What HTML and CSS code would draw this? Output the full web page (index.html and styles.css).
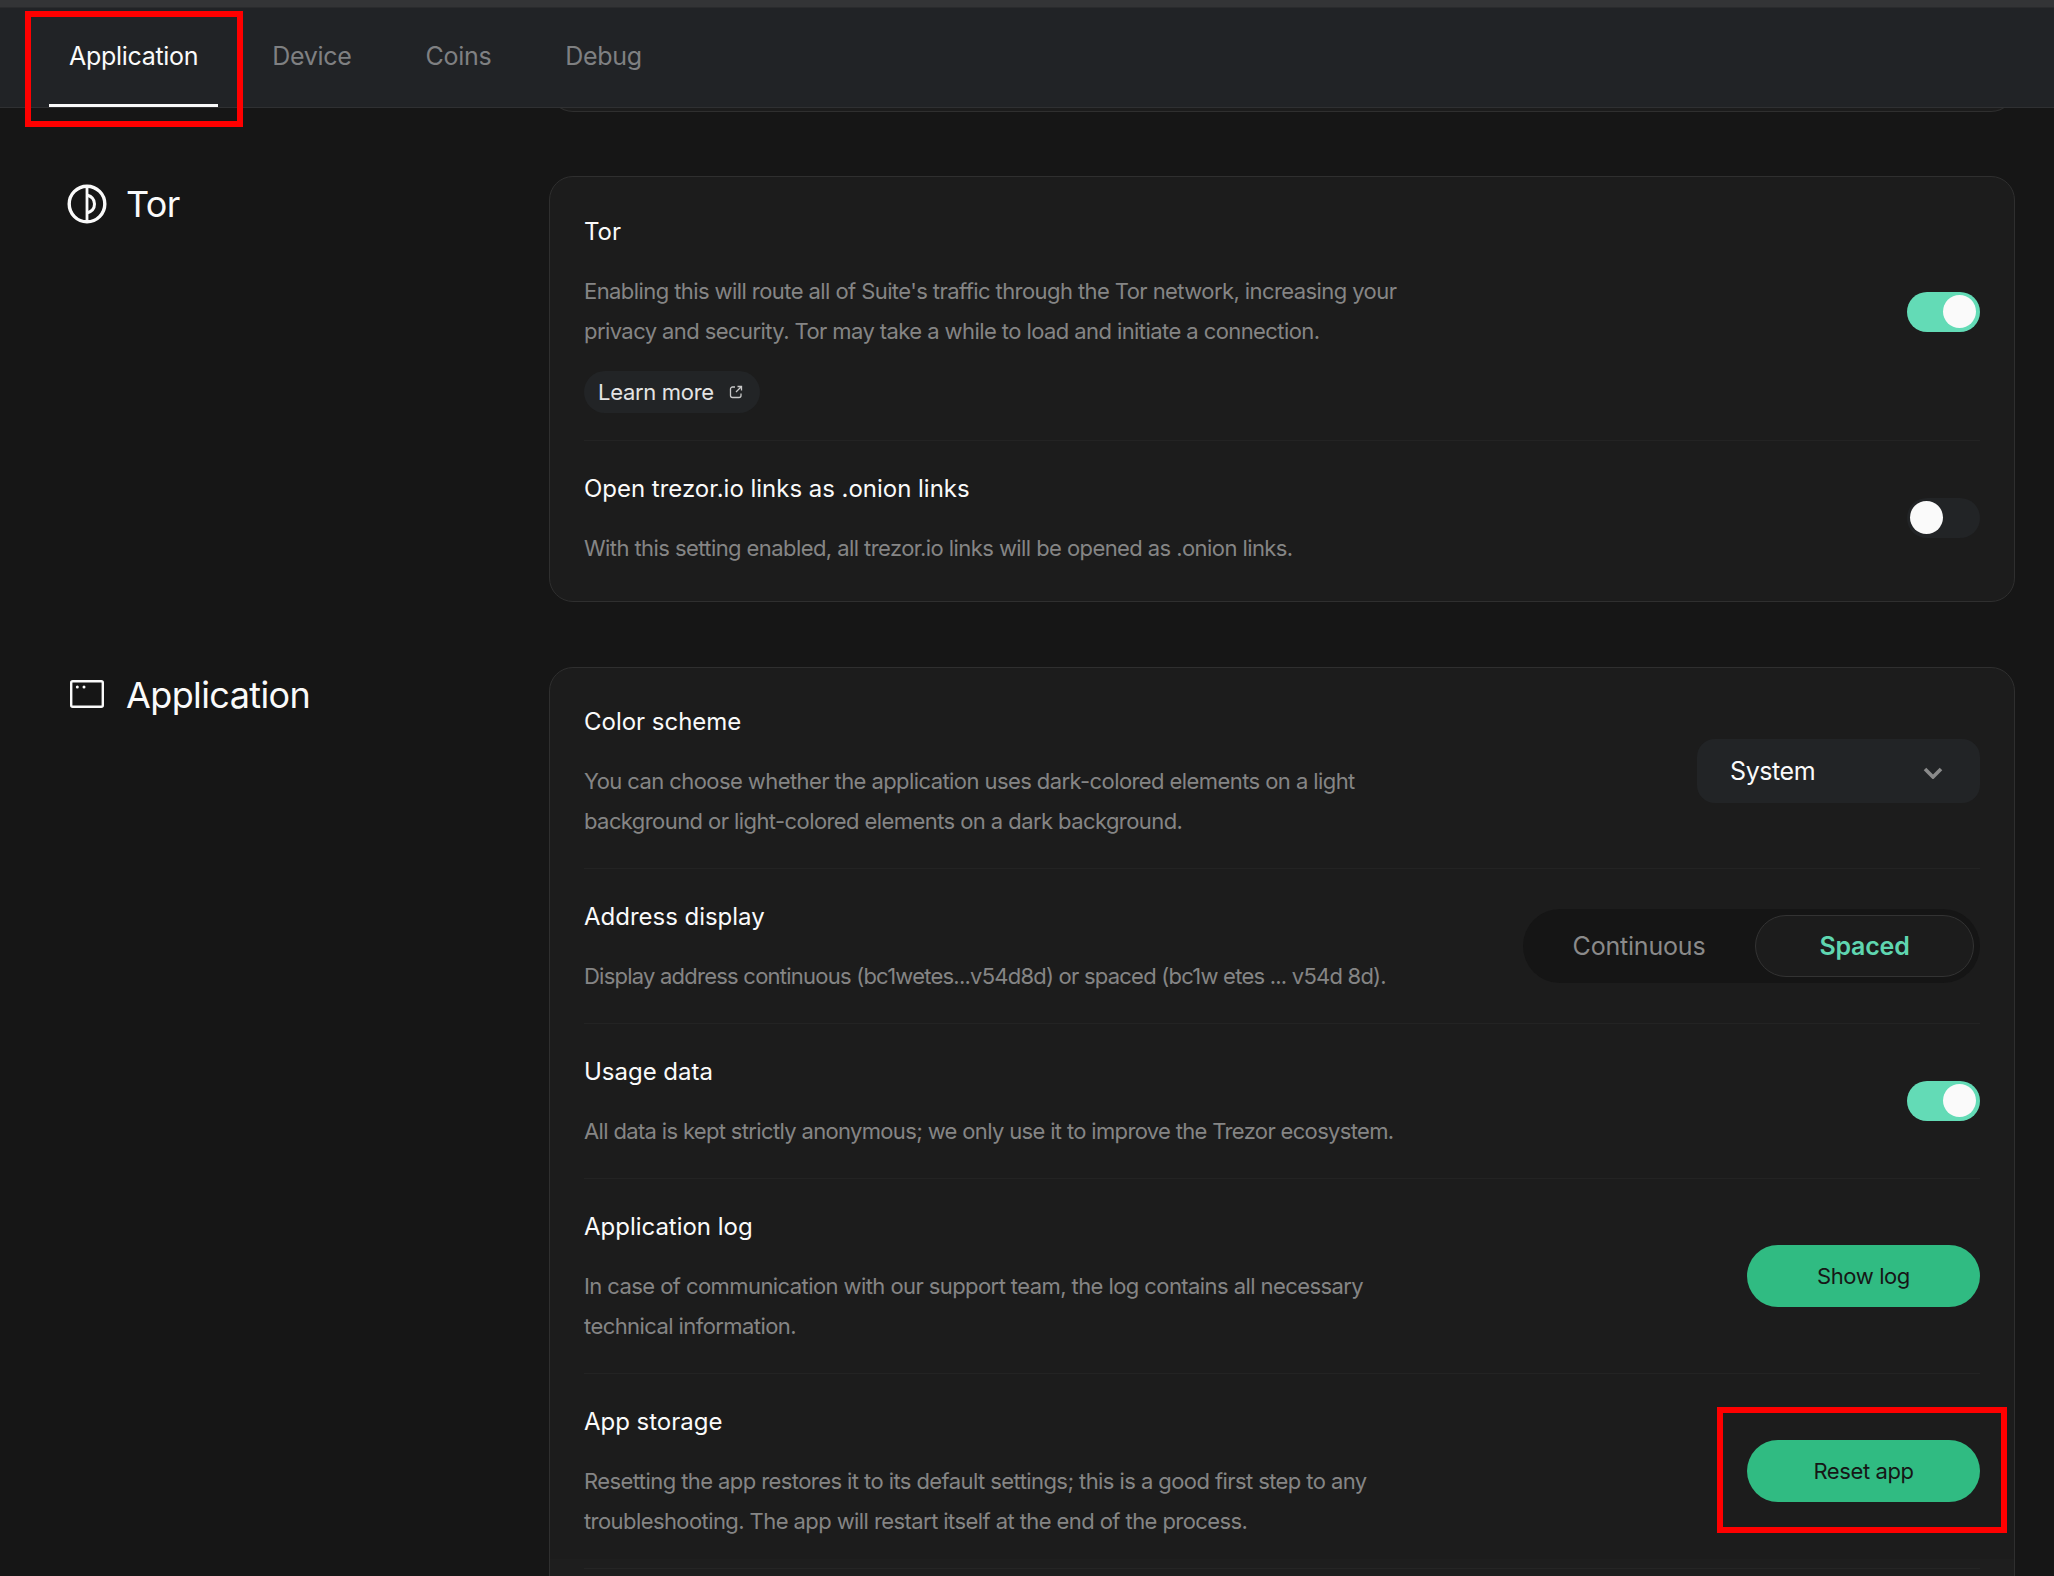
FILE: index.html
```html
<!DOCTYPE html>
<html lang="en">
<head>
<meta charset="utf-8">
<title>Settings</title>
<link rel="stylesheet" href="styles.css">
</head>
<body>
<div class="shot">
  <div class="topstrip"></div>
  <nav class="tabs">
    <span class="tab active">Application</span>
    <span class="tab">Device</span>
    <span class="tab">Coins</span>
    <span class="tab">Debug</span>
  </nav>
  <main class="main">
    <div class="stub-row"><div class="stub-card"></div></div>

    <section class="section">
      <h2 class="section-title">
        <svg class="section-icon" viewBox="0 0 40 40" fill="none" stroke="currentColor" stroke-width="3.400">
          <circle cx="20" cy="20" r="17.800"/>
          <path d="M20 2.500v35" stroke-width="2.800"/>
          <path d="M20 11c5 1.500 7.500 5 7.500 9s-2.500 7.500-7.500 9" stroke-width="3"/>
        </svg>
        <span>Tor</span>
      </h2>
      <div class="card card-tor">
        <div class="row row-first">
          <div class="row-text">
            <h3 class="row-title">Tor</h3>
            <p class="row-desc">Enabling this will route all of Suite's traffic through the Tor network, increasing your privacy and security. Tor may take a while to load and initiate a connection.</p>
            <a class="learn"><span>Learn more</span>
              <svg class="learn-icon" viewBox="0 0 16 16" fill="none" stroke="currentColor" stroke-width="1.300">
                <path d="M7 3H4.500A2 2 0 0 0 2.500 5v6.500a2 2 0 0 0 2 2H11a2 2 0 0 0 2-2V9.500"/>
                <path d="M9.500 2.500h4v4M13.500 2.500 8 8"/>
              </svg>
            </a>
          </div>
          <div class="control"><span class="toggle on"><i class="knob"></i></span></div>
        </div>
        <div class="row row-last">
          <div class="row-text">
            <h3 class="row-title">Open trezor.io links as .onion links</h3>
            <p class="row-desc">With this setting enabled, all trezor.io links will be opened as .onion links.</p>
          </div>
          <div class="control"><span class="toggle"><i class="knob"></i></span></div>
        </div>
      </div>
    </section>

    <section class="section section-app">
      <h2 class="section-title">
        <svg class="section-icon app-icon" viewBox="0 0 34 28" fill="none" stroke="currentColor" stroke-width="2.400">
          <rect x="1.200" y="1.200" width="31.600" height="25.600" rx="1.500"/>
          <circle cx="7.300" cy="7" r="1.500" fill="currentColor" stroke="none"/>
          <circle cx="14" cy="7" r="1.500" fill="currentColor" stroke="none"/>
        </svg>
        <span>Application</span>
      </h2>
      <div class="card">
        <div class="row row-first">
          <div class="row-text">
            <h3 class="row-title">Color scheme</h3>
            <p class="row-desc">You can choose whether the application uses dark-colored elements on a light background or light-colored elements on a dark background.</p>
          </div>
          <div class="control">
            <div class="select"><span>System</span>
              <svg class="chevron" viewBox="0 0 20 12" fill="none" stroke="currentColor" stroke-width="3.600"><path d="M2 2l8 8 8-8"/></svg>
            </div>
          </div>
        </div>
        <div class="row">
          <div class="row-text">
            <h3 class="row-title">Address display</h3>
            <p class="row-desc desc-tight">Display address continuous (bc1wetes...v54d8d) or spaced (bc1w etes ... v54d 8d).</p>
          </div>
          <div class="control">
            <div class="segment"><span class="seg">Continuous</span><span class="seg seg-active">Spaced</span></div>
          </div>
        </div>
        <div class="row">
          <div class="row-text">
            <h3 class="row-title">Usage data</h3>
            <p class="row-desc desc-snug">All data is kept strictly anonymous; we only use it to improve the Trezor ecosystem.</p>
          </div>
          <div class="control"><span class="toggle on"><i class="knob"></i></span></div>
        </div>
        <div class="row">
          <div class="row-text">
            <h3 class="row-title">Application log</h3>
            <p class="row-desc">In case of communication with our support team, the log contains all necessary technical information.</p>
          </div>
          <div class="control"><button class="btn">Show log</button></div>
        </div>
        <div class="row">
          <div class="row-text">
            <h3 class="row-title">App storage</h3>
            <p class="row-desc">Resetting the app restores it to its default settings; this is a good first step to any troubleshooting. The app will restart itself at the end of the process.</p>
          </div>
          <div class="control"><button class="btn">Reset app</button></div>
        </div>
        <div class="row-more"></div>
      </div>
    </section>
  </main>
  <div class="card-fade"></div>
  <div class="mark mark-tab"></div>
  <div class="mark mark-reset"></div>
</div>
</body>
</html>
```

FILE: styles.css
```css
* { box-sizing: border-box; }
html, body { margin: 0; padding: 0; background: #161616; }
body { font-family: Inter, "Noto Sans", sans-serif; color: #fafafa; }

.shot { position: relative; width: 2054px; height: 1576px; overflow: hidden; background: #161616; }
.topstrip { position: relative; z-index: 1; height: 8px; background: #333436; border-bottom: 1px solid #2a2b2d; }

.tabs { position: relative; z-index: 1; display: flex; gap: 34px; height: 100px; padding-left: 49px; background: #212326; border-bottom: 1px solid #2f3032; }
.tab { position: relative; padding: 0 20px; height: 99px; line-height: 97px; font-size: 25px; letter-spacing: -0.3px; color: #7f8082; }
.tab.active { color: #fafafa; }
.tab.active::after { content: ""; position: absolute; left: 0; right: 0; bottom: 0; height: 3px; background: #fafafa; }

.main { padding-left: 67px; padding-right: 39px; }
.stub-row { padding-left: 482px; }
.stub-card { height: 30px; margin-top: -26px; border: 1px solid #2f2f2f; border-top: 0; border-radius: 0 0 24px 24px; background: #1c1c1c; }

.section { display: flex; margin-top: 64px; }
.section-app { margin-top: 65px; }
.section-title { flex: 0 0 482px; display: flex; align-items: flex-start; gap: 19px; margin: 0; font-size: 36px; font-weight: 400; line-height: 56px; letter-spacing: -0.6px; }
.section-icon { width: 40px; height: 40px; margin-top: 8px; flex: none; }
.app-icon { width: 34px; height: 28px; margin: 13px 3px 0; }

.card { flex: 1; padding: 0 34px; background: #1c1c1c; border: 1px solid #2f2f2f; border-radius: 24px; }
.card-tor { padding-top: 1px; }

.row { display: flex; justify-content: space-between; align-items: center; padding: 31px 0 27px; border-bottom: 1px solid #232323; }
.row-first { padding-top: 37px; }
.row-last { padding-bottom: 33px; border-bottom: 0; }
.row-more { height: 40px; }
.row-text { width: 830px; }
.row-title { margin: 0 0 23px; padding-top: 1px; font-size: 24px; line-height: 32px; font-weight: 400; letter-spacing: -0.02px; color: #fafafa; }
.row-desc { margin: 0; font-size: 22px; line-height: 40px; font-weight: 400; letter-spacing: -0.58px; color: #858585; }
.desc-tight { letter-spacing: -0.77px; }
.desc-snug { letter-spacing: -0.66px; }

.control { margin-bottom: 5px; display: flex; }

.learn { display: inline-flex; align-items: center; gap: 14px; height: 42px; margin-top: 20px; padding: 0 16px 0 14px; border-radius: 21px; background: #222426; color: #e4e4e4; font-size: 22px; letter-spacing: -0.3px; }
.learn-icon { width: 16px; height: 16px; color: #c8c8c8; }

.toggle { display: block; position: relative; width: 73px; height: 40px; border-radius: 20px; background: #222426; }
.toggle.on { background: #63dbb6; }
.knob { position: absolute; top: 3px; left: 3px; width: 33px; height: 33px; border-radius: 50%; background: #fafafa; }
.toggle.on .knob { left: 36px; }

.select { display: flex; align-items: center; justify-content: space-between; width: 283px; height: 64px; padding: 0 37px 0 33px; border-radius: 18px; background: #222426; font-size: 25px; letter-spacing: -0.4px; color: #fafafa; }
.chevron { width: 20px; height: 12px; color: #8a8a8a; margin-top: 4px; }

.segment { display: flex; align-items: center; justify-content: space-between; width: 457px; height: 74px; padding: 0 6px 0 0; border-radius: 37px; background: #151515; }
.seg { flex: 1; text-align: center; font-size: 25px; letter-spacing: -0.2px; color: #8a8a8a; }
.seg-active { flex: 0 0 219px; height: 62px; line-height: 60px; border: 1px solid #333; border-radius: 31px; background: #1c1c1c; color: #5fd6b0; font-weight: 600; }

.btn { width: 233px; height: 62px; border: 0; border-radius: 31px; background: #30bb82; color: #161616; font-family: inherit; font-size: 22px; font-weight: 400; letter-spacing: -0.4px; padding: 0; }

.card-fade { position: absolute; left: 550px; top: 1559px; width: 1464px; height: 17px; background: rgba(255, 255, 255, 0.012); }

.mark { position: absolute; z-index: 2; border: 6px solid #ff0000; }
.mark-tab { left: 25px; top: 11px; width: 218px; height: 116px; }
.mark-reset { left: 1717px; top: 1407px; width: 290px; height: 126px; }
```
